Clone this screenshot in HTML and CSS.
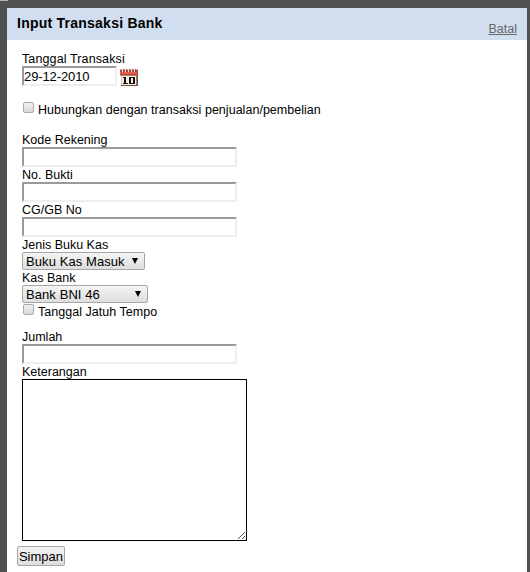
FILE: index.html
```html
<!DOCTYPE html>
<html lang="id">
<head>
<meta charset="utf-8">
<title>Input Transaksi Bank</title>
<link rel="stylesheet" href="styles.css">
</head>
<body>
<div class="panel">
  <header class="header">
    <h1>Input Transaksi Bank</h1>
    <a class="cancel" href="#">Batal</a>
  </header>
  <form class="form">
    <label class="label date-label" for="tgl">Tanggal Transaksi</label>
    <div class="date-row">
      <input class="field date" id="tgl" type="text" value="29-12-2010">
      <svg class="calendar" width="18" height="18" viewBox="0 0 18 18">
        <path fill="#6d5144" d="M1 2h17v16H1z"/>
        <path fill="#c3ad9b" d="M1 7h15.500v10H1z"/>
        <path fill="#f5eee4" d="M1.500 8H16v9H1.500z"/>
        <path fill="#b8453a" d="M0 1.500h17.500l.5 6H0z"/>
        <path fill="#d9604f" d="M0 4h17v2H0z"/>
        <path stroke="#f2ded8" d="M2.500 0v4M5.500 0v4M8.500 0v4M11.500 0v4M14.500 0v4"/>
        <path stroke="#8a463b" stroke-width=".7" d="M3.500 1v3M6.500 1v3M9.500 1v3M12.500 1v3M15.500 1v3"/>
        <path fill="#17110f" d="M3 9h3v6h2v1H3v-1h1v-5H3z"/>
        <path fill="#17110f" fill-rule="evenodd" d="M9 9h6v7H9zM11 10v5h2v-5z"/>
      </svg>
    </div>
    <label class="check link-check"><span class="box"></span><span class="text">Hubungkan dengan transaksi penjualan/pembelian</span></label>
    <label class="label" for="kode">Kode Rekening</label>
    <input class="field" id="kode" type="text">
    <label class="label" for="bukti">No. Bukti</label>
    <input class="field" id="bukti" type="text">
    <label class="label" for="cg">CG/GB No</label>
    <input class="field" id="cg" type="text">
    <span class="label">Jenis Buku Kas</span>
    <div class="select book-select"><span>Buku Kas Masuk</span><i class="arrow"></i></div>
    <span class="label">Kas Bank</span>
    <div class="select bank-select"><span>Bank BNI 46</span><i class="arrow"></i></div>
    <label class="check due-check"><span class="box"></span><span class="text">Tanggal Jatuh Tempo</span></label>
    <label class="label" for="jumlah">Jumlah</label>
    <input class="field" id="jumlah" type="text">
    <label class="label" for="ket">Keterangan</label>
    <div class="area">
      <textarea id="ket"></textarea>
      <svg class="grip" width="9" height="9" viewBox="0 0 9 9" shape-rendering="crispEdges"><path fill="none" stroke="#555" d="M1 8L8 1M5 8L8 5"/></svg>
    </div>
    <button class="save" type="button">Simpan</button>
  </form>
</div>
</body>
</html>
```
FILE: styles.css
```css
* { box-sizing: border-box; }
html, body { height: 100%; overflow: hidden; }
body {
  margin: 0;
  padding: 8px 3px 0 7px;
  background: linear-gradient(#b5b5b5, #b5b5b5) 0 0 / 8px 1px no-repeat #505050;
  color: #000;
  font: 12.5px/15px "Liberation Sans", Arial, sans-serif;
}
.panel { height: 564px; background: #fff; }
.header {
  display: flex;
  justify-content: space-between;
  height: 32px;
  padding: 0 10px;
  background: #d1deef;
}
h1 { margin: 7px 0 0; font-size: 14px; line-height: 16px; letter-spacing: .24px; }
.cancel { margin-top: 14px; color: #666; }
.form { padding: 11px 15px 0; }
.label { display: block; height: 15px; padding-top: 1px; letter-spacing: 0; white-space: nowrap; }
.date-label { letter-spacing: .12px; }
.field {
  display: block;
  width: 215px;
  height: 20px;
  margin: 0;
  padding: 0;
  border: 2px solid;
  border-color: #9a9a9a #eee #eee #9a9a9a;
  border-radius: 0;
  outline: 0;
  background: #fff;
  font: 13px/16px "Liberation Sans", Arial, sans-serif;
}
.date { width: 95px; letter-spacing: -.1px; }
.date-row { display: flex; height: 20px; gap: 3px; }
.calendar { margin-top: 2px; }
.check { display: flex; height: 16px; padding-left: 1px; gap: 4px; letter-spacing: .03px; white-space: nowrap; }
.box {
  width: 11px;
  height: 11px;
  margin-top: 1px;
  border: 1px solid #aaa;
  border-radius: 2px;
  background: linear-gradient(#f0f0f0, #d9d9d9);
}
.link-check { margin: 16px 0 14px; }
.link-check .box { margin-top: 0; }
.text { margin-top: 1px; }
.due-check .text { margin-top: 2px; }
.select {
  display: flex;
  align-items: center;
  justify-content: space-between;
  height: 18px;
  padding: 0 6px 0 3px;
  border: 1px solid #a6a6a6;
  border-radius: 2px;
  background: linear-gradient(#f4f4f4, #dedede);
  font-size: 13px;
  letter-spacing: .08px;
  white-space: nowrap;
}
.book-select { width: 123px; }
.bank-select { width: 126px; }
.arrow { border: solid transparent; border-width: 6px 3px 0; border-top-color: #000; }
.due-check { margin-bottom: 10px; }
.area { position: relative; width: 225px; height: 162px; }
textarea {
  display: block;
  width: 100%;
  height: 100%;
  margin: 0;
  border: 1px solid #000;
  border-radius: 0;
  outline: 0;
  resize: none;
}
.grip { position: absolute; right: 1px; bottom: 1px; }
.save {
  display: block;
  width: 48px;
  height: 20px;
  margin: 5px 0 0 -5px;
  padding: 1px 0 0;
  border: 1px solid #a6a6a6;
  border-radius: 2px;
  background: linear-gradient(#f4f4f4, #dedede);
  color: #000;
  font: 13px/17px "Liberation Sans", Arial, sans-serif;
}
```
